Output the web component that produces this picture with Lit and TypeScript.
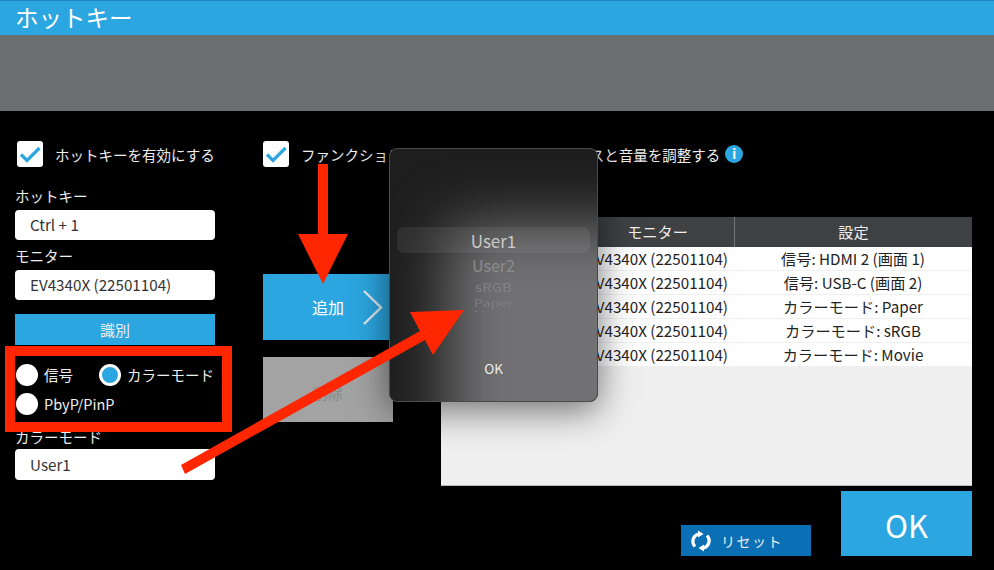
import { LitElement, html, css, svg } from 'lit';
import { customElement } from 'lit/decorators.js';

const rows = [
  ['Ctrl + 1', '信号: HDMI 2 (画面 1)'],
  ['Ctrl + 2', '信号: USB-C (画面 2)'],
  ['Ctrl + 3', 'カラーモード: Paper'],
  ['Ctrl + 4', 'カラーモード: sRGB'],
  ['Ctrl + 5', 'カラーモード: Movie'],
];

const check = svg`<svg class="tick" viewBox="0 0 26 26"><path d="M4 13.5l6 6L22.500 7" fill="none" stroke="#2ca6e0" stroke-width="3.200"/></svg>`;

@customElement('app-root')
export class AppRoot extends LitElement {
  static styles = css`
    :host {
      display: block;
      font-family: "Noto Sans CJK JP", "Noto Sans", sans-serif;
    }
    .page {
      position: relative;
      width: 994px;
      height: 570px;
      overflow: hidden;
      background: #000;
      color: #eee;
      font-size: 14.500px;
    }
    .title {
      height: 35px;
      box-sizing: border-box;
      border-top: 1px solid #2088bd;
      padding-left: 15px;
      background: #2ca6e0;
      color: #fff;
      font-size: 23.500px;
      line-height: 33px;
    }
    .band {
      height: 76px;
      background: #6d6e70;
    }
    .body {
      display: flex;
      gap: 48px;
      padding: 30px 22px 0 15px;
    }
    .left {
      display: flex;
      flex-direction: column;
      width: 200px;
    }
    .right {
      display: flex;
      flex-direction: column;
      flex: 1;
    }
    .checkrow {
      display: flex;
      align-items: center;
      gap: 12px;
      height: 26px;
      white-space: nowrap;
    }
    .left .checkrow { margin-left: 2px; }
    .box {
      flex: none;
      width: 26px;
      height: 26px;
      border-radius: 3px;
      background: #fff;
    }
    .tick { display: block; width: 26px; height: 26px; }
    .info {
      flex: none;
      width: 18px;
      height: 18px;
      margin-left: -7px;
      border-radius: 50%;
      background: #2ca6e0;
      color: #fff;
      font-size: 13px;
      font-weight: 700;
      line-height: 18px;
      text-align: center;
    }
    .label {
      height: 20px;
      margin-bottom: 4px;
      line-height: 20px;
    }
    .label.first { margin-top: 19px; }
    .label.next { margin-top: 6px; }
    .field {
      height: 30px;
      box-sizing: border-box;
      padding-left: 15px;
      border-radius: 4px;
      background: #fff;
      color: #333;
      font-size: 15.200px;
      line-height: 29px;
    }
    .field.tall { height: 31px; line-height: 30px; }
    .identify {
      height: 31px;
      margin-top: 14px;
      background: #2ca6e0;
      color: #eee;
      font-size: 15px;
      line-height: 31px;
      text-align: center;
    }
    .radios {
      display: flex;
      flex-wrap: wrap;
      align-items: center;
      column-gap: 5px;
      row-gap: 7px;
      height: 51px;
      margin: 19px 0 0 1px;
    }
    .radio {
      display: flex;
      align-items: center;
      gap: 6px;
      height: 22px;
      line-height: 20px;
    }
    .radio.wide { flex-basis: 100%; }
    .radio.sig { width: 78px; }
    .dot {
      width: 22px;
      height: 22px;
      border-radius: 50%;
      background: #fff;
    }
    .dot.on {
      box-sizing: border-box;
      border: 3px solid #fff;
      background: #2ca6e0;
    }
    .label.mode-label { margin: 12px 0 2px; }
    .work {
      display: flex;
      gap: 48px;
      margin-top: 50px;
    }
    .actions {
      display: flex;
      flex-direction: column;
      gap: 17px;
      width: 130px;
      padding-top: 57px;
    }
    .add {
      display: flex;
      position: relative;
      align-items: center;
      justify-content: center;
      height: 66px;
      background: #2ca6e0;
      color: #fff;
      font-size: 16px;
    }
    .chevron {
      position: absolute;
      left: 99px;
      top: 15px;
      width: 23px;
      height: 37px;
    }
    .remove {
      height: 65px;
      background: #a3a3a3;
      color: #8a8a8a;
      font-size: 15px;
      line-height: 72px;
      text-align: center;
    }
    .table {
      display: flex;
      flex-direction: column;
      width: 531px;
      height: 269px;
      box-sizing: border-box;
      border-bottom: 1px solid #bbb;
      background: #efefef;
      color: #222;
      font-size: 15.200px;
    }
    .head, .row {
      display: grid;
      grid-template-columns: 125px 168px 238px;
      text-align: center;
    }
    .head {
      height: 30px;
      background: #3f4042;
      color: #eee;
      line-height: 29px;
    }
    .head span + span { border-left: 1px solid #777; }
    .head .mon { padding-left: 14px; }
    .row {
      height: 23px;
      margin-bottom: 1px;
      background: #fff;
      line-height: 23px;
      white-space: nowrap;
    }
    .row .monitor { text-align: right; padding-right: 6px; }
    .footer {
      display: flex;
      align-items: flex-end;
      justify-content: flex-end;
      gap: 30px;
      margin-top: 5px;
    }
    .reset {
      display: flex;
      align-items: center;
      gap: 9px;
      width: 130px;
      height: 31px;
      box-sizing: border-box;
      padding-left: 9px;
      background: #0a6fb4;
      color: #eee;
      font-size: 14px;
      letter-spacing: 1.5px;
    }
    .reset svg { width: 22px; height: 22px; }
    .ok {
      width: 131px;
      height: 65px;
      background: #2ca6e0;
      color: #fff;
      font-size: 31px;
      line-height: 67px;
      text-align: center;
    }
    .dialog {
      position: absolute;
      left: 389px;
      top: 148px;
      display: flex;
      flex-direction: column;
      align-items: center;
      width: 209px;
      height: 254px;
      box-sizing: border-box;
      padding: 78px 7px 0;
      overflow: hidden;
      border: 1px solid #4a4a4a;
      border-radius: 8px;
      background: #1e1e1e;
      box-shadow: 0 8px 36px rgba(0, 0, 0, 0.55);
    }
    /* the table seen through the frosted dialog */
    .glow {
      position: absolute;
      left: 58px;
      top: 76px;
      width: 280px;
      height: 280px;
      background: #727274;
      filter: blur(30px);
    }
    .picker {
      position: relative;
      display: flex;
      flex-direction: column;
      align-items: center;
      width: 100%;
      height: 85px;
      overflow: hidden;
      color: #8c8c8c;
    }
    .picked {
      flex: none;
      width: 100%;
      height: 26px;
      border-radius: 7px;
      background: rgba(255, 255, 255, 0.07);
      color: #c8c8c8;
      font-size: 17px;
      line-height: 27px;
      text-align: center;
    }
    .wheel { flex: none; }
    .w1 { font-size: 16px; height: 24px; line-height: 24px; }
    .w2 { font-size: 15px; height: 20px; line-height: 20px; color: #828282; transform: scaleY(0.8); }
    .w3 { font-size: 14.500px; height: 12px; line-height: 12px; color: #7e7e7e; transform: scaleY(0.7); }
    .w4 { font-size: 14.500px; height: 7px; line-height: 7px; color: #7e7e7e; transform: scaleY(0.25); }
    .dialog-ok {
      position: relative;
      margin-top: 46px;
      color: #eee;
      font-size: 13.500px;
      line-height: 20px;
    }
    .marks {
      position: absolute;
      inset: 0;
      width: 994px;
      height: 570px;
      pointer-events: none;
    }
  `;

  render() {
    return html`
      <div class="page">
        <div class="title">ホットキー</div>
        <div class="band"></div>
        <div class="body">
          <div class="left">
            <div class="checkrow"><span class="box">${check}</span>ホットキーを有効にする</div>
            <div class="label first">ホットキー</div>
            <div class="field">Ctrl + 1</div>
            <div class="label next">モニター</div>
            <div class="field">EV4340X (22501104)</div>
            <div class="identify">識別</div>
            <div class="radios">
              <div class="radio sig"><span class="dot"></span>信号</div>
              <div class="radio"><span class="dot on"></span>カラーモード</div>
              <div class="radio wide"><span class="dot"></span>PbyP/PinP</div>
            </div>
            <div class="label mode-label">カラーモード</div>
            <div class="field tall">User1</div>
          </div>
          <div class="right">
            <div class="checkrow">
              <span class="box">${check}</span>
              ファンクションキーを使用して、ブライトネスと音量を調整する
              <span class="info">i</span>
            </div>
            <div class="work">
              <div class="actions">
                <div class="add">
                  追加
                  <svg class="chevron" viewBox="0 0 23 37"><path d="M2 2l17 16.500L2 35" fill="none" stroke="#dfe8ee" stroke-width="2.400"/></svg>
                </div>
                <div class="remove">削除</div>
              </div>
              <div>
                <div class="table">
                  <div class="head"><span>ホットキー</span><span class="mon">モニター</span><span>設定</span></div>
                  ${rows.map(([key, setting]) => html`
                    <div class="row"><span>${key}</span><span class="monitor">EV4340X (22501104)</span><span>${setting}</span></div>
                  `)}
                </div>
              </div>
            </div>
            <div class="footer">
              <div class="reset">
                <svg viewBox="0 0 22 22">
                  <path d="M5 16.500A7.500 7.500 0 0 1 8.500 4M17 5.500A7.500 7.500 0 0 1 13.500 18" fill="none" stroke="#fff" stroke-width="3.200"/>
                  <path d="M8 0.500l5.500 3.500-5.500 3.500zM14 21.500l-5.500-3.500 5.500-3.500z" fill="#fff"/>
                </svg>
                リセット
              </div>
              <div class="ok">OK</div>
            </div>
          </div>
        </div>
        <div class="dialog">
          <div class="glow"></div>
          <div class="picker">
            <div class="picked">User1</div>
            <div class="wheel w1">User2</div>
            <div class="wheel w2">sRGB</div>
            <div class="wheel w3">Paper</div>
            <div class="wheel w4">Movie</div>
          </div>
          <div class="dialog-ok">OK</div>
        </div>
        <svg class="marks" viewBox="0 0 994 570">
          <rect x="10" y="351" width="217" height="76" fill="none" stroke="#ff2600" stroke-width="10"/>
          <path d="M318 164h10v70h20l-25 50-25-50h20z" fill="#ff2600"/>
          <path d="M181 465l4 9 240-134 8 15 31-45-54 2 10 19z" fill="#ff2600"/>
        </svg>
      </div>
    `;
  }
}
